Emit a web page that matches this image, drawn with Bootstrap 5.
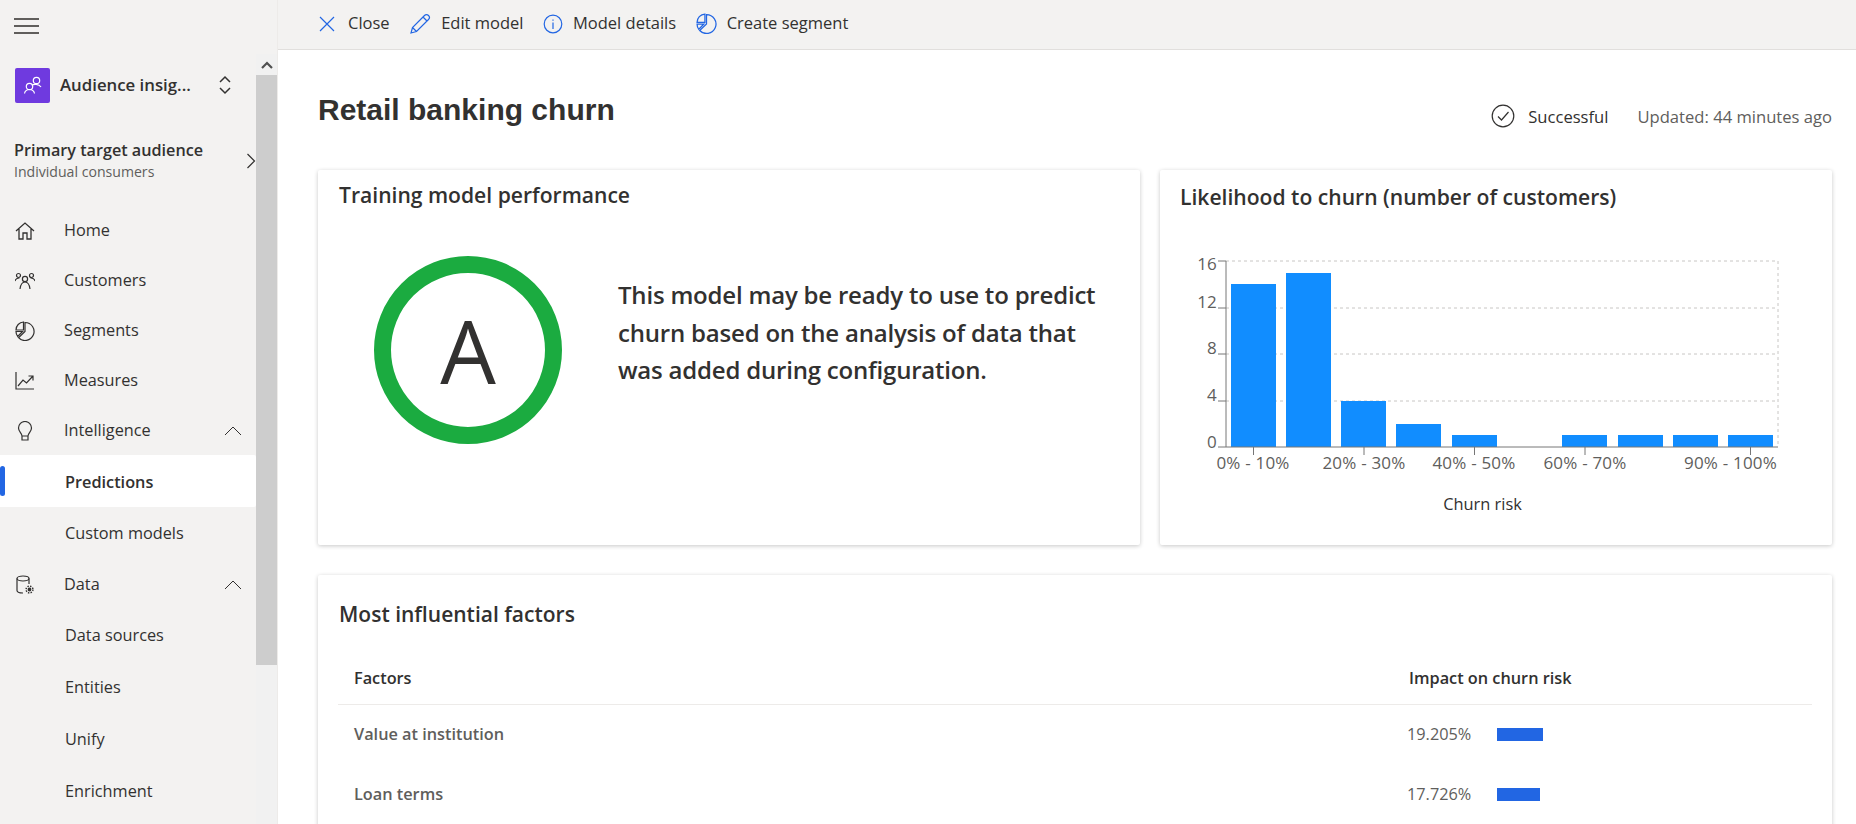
<!doctype html>
<html lang="en">
<head>
<meta charset="utf-8">
<title>Retail banking churn</title>
<link href="https://cdn.jsdelivr.net/npm/bootstrap@5.3.0/dist/css/bootstrap.min.css" rel="stylesheet">
<style>
html,body{height:824px;overflow:hidden;background:#fff}
body{font-family:"Open Sans","Noto Sans",sans-serif;color:#323130;font-size:16.300px}
.shell{height:824px;overflow:hidden}
.side{width:278px;background:#f3f2f1;flex:none;height:824px;overflow:hidden;border-right:1px solid #edebe9}
.burger{height:54px;padding:18px 14px}
.burger span{display:block;width:25px;height:2px;background:#605e5c;margin-bottom:5px}
.sidecol{width:256px;flex:none}
.scrolltrack{width:21px;flex:none;background:#f1f1f1;height:770px}
.scrollup{height:21px;color:#505050}
.scrollthumb{height:590px;background:#cdcdcd}
.switcher{height:62px;padding-left:15px;gap:10px;font-weight:600;font-size:16.800px}
.appicon{width:35px;height:35px;background:#6f3adf;border-radius:2px}
.target{height:89px;padding:0 0 0 14px}
.target .t1{font-weight:600;font-size:16.200px;line-height:21px;margin-bottom:1px}
.target .t2{font-size:14.100px;color:#605e5c;line-height:20px}
.navrow{height:50px;padding-left:15px;padding-top:1px;color:#323130;text-decoration:none}
.navrow .ic{width:24px;margin-right:25px;flex:none;display:flex}
.subrow{height:52px;padding-left:65px;padding-top:1px;color:#323130;text-decoration:none;position:relative}
.subrow.act{background:#fff;font-weight:600;border-radius:0 2px 2px 0;padding-top:2px}
.subrow.act::before{content:"";position:absolute;left:0;top:11px;width:5px;height:30px;background:#2266e3;border-radius:3px}
.chevtail{width:14px;flex:none}
.mainpane{min-width:0;height:824px;overflow:hidden}
.topbar{height:50px;background:#f3f2f1;border-bottom:1px solid #e1dfdd;padding:0 0 2px 40px;gap:19.500px;font-size:16.500px;flex:none}
.tool{gap:10px;color:#323130}
.tool:first-child{gap:12px}
.content{padding:0 24px 0 40px;min-width:0}
.titlerow{height:120px}
.pagetitle{font-family:"Liberation Sans",Arial,sans-serif;font-weight:700;font-size:30px;color:#323130;margin:0;padding-top:42px}
.status{padding-top:55px;font-size:16.600px}
.status svg{margin-top:-1px;margin-right:13px}
.updated{color:#605e5c;margin-left:29px}
.pane{border:0;border-radius:2px;box-shadow:0 1px 4px rgba(0,0,0,.22);background:#fff}
.cardrow{gap:20px;height:375px}
.pane1{width:822px}
.pane2{width:672px}
.panehead{font-size:21.100px;font-weight:600;margin:0;line-height:28px;color:#323130}
.head1{padding:11px 0 0 21px}
.head2{padding:9px 0 0 20px;height:59px;margin-top:4px;margin-bottom:-3px}
.ringwrap{padding:47px 0 0 56px}
.ring{width:188px;height:188px;border:17px solid #1bab40;border-radius:50%;font-size:88px;line-height:1;flex:none;font-weight:400}
.verdict{font-size:24px;font-weight:600;line-height:37.500px;margin:0 0 0 56px;padding-top:20px;letter-spacing:-.2px;width:480px}
.chart{display:block}
.chart text{font-family:"Open Sans",sans-serif;font-size:17px;fill:#605e5c;letter-spacing:.2px}
.chart text.ttl{fill:#323130;font-size:16.400px;letter-spacing:0}
.pane3{margin-top:30px;height:400px;padding:0 20px}
.pane3 h2{padding-top:25px;padding-left:1px;margin-bottom:24px;font-size:21px}
.factors{margin:0;--bs-table-color:#605e5c;font-size:16.300px}
.factors th{color:#323130;font-weight:600;border-bottom:1px solid #edebe9;padding:10px 16px;height:52px;vertical-align:middle}
.factors td{border:0;padding:0 16px;height:60px;vertical-align:middle;font-weight:600;color:#605e5c}
.factors td.val{font-weight:400;padding-left:14px}
.factors th:last-child{width:419px}
.impactbar{height:13px;background:#2266e3;margin-left:26px}
</style>
</head>
<body>
<div class="d-flex shell">
  <aside class="side">
    <div class="burger"><span></span><span></span><span></span></div>
    <div class="d-flex">
      <div class="sidecol">
        <div class="d-flex align-items-center switcher">
          <div class="appicon d-flex align-items-center justify-content-center">
            <svg width="24" height="24" viewBox="0 0 24 24" fill="none" stroke="#fff" stroke-width="1.2"><circle cx="15.5" cy="7.5" r="3.2"/><path d="M11 12.5c1-1.6 7-1.8 9 1.5"/><circle cx="8.5" cy="13.5" r="3.2"/><path d="M3.5 20.5c.5-3 2-4 5-4s4.500 1 5 4"/></svg>
          </div>
          <span class="flex-grow-1">Audience insig...</span>
          <svg class="me-4" width="14" height="20" viewBox="0 0 14 20" fill="none" stroke="#323130" stroke-width="1.5"><path d="M2 7l5-5 5 5M2 13l5 5 5-5"/></svg>
        </div>
        <div class="d-flex align-items-center target">
          <div class="flex-grow-1"><div class="t1">Primary target audience</div><div class="t2">Individual consumers</div></div>
          <svg width="10" height="16" viewBox="0 0 10 16" fill="none" stroke="#323130" stroke-width="1.2"><path d="M1.500 1l7 7-7 7"/></svg>
        </div>
        <a class="d-flex align-items-center navrow"><span class="ic"><svg width="20" height="20" viewBox="0 0 20 20" fill="none" stroke="#323130" stroke-width="1.300"><path d="M1 10l9-8 9 8M4 8v10h4v-6h4v6h4V8"/></svg></span>Home</a>
        <a class="d-flex align-items-center navrow"><span class="ic"><svg width="20" height="20" viewBox="0 0 20 20" fill="none" stroke="#323130" stroke-width="1.200"><circle cx="10" cy="8" r="2.600"/><path d="M5 18c.5-4 2-7 5-7s4.500 3 5 7"/><circle cx="3.500" cy="4.500" r="2"/><circle cx="16.500" cy="4.500" r="2"/><path d="M0 10c.5-2 2-3 4.500-3M20 10c-.5-2-2-3-4.500-3"/></svg></span>Customers</a>
        <a class="d-flex align-items-center navrow"><span class="ic"><svg width="20" height="20" viewBox="0 0 20 20" fill="none" stroke="#323130" stroke-width="1.200"><path d="M10 1.500a9 9 0 1 1-6.500 15.200L10 10.500z"/><path d="M8.500 1v8H1a8 8 0 0 1 7.500-8zM1 10.500h6.500L2.700 15.500A8 8 0 0 1 1 10.500z"/></svg></span>Segments</a>
        <a class="d-flex align-items-center navrow"><span class="ic"><svg width="20" height="20" viewBox="0 0 20 20" fill="none" stroke="#323130" stroke-width="1.200"><path d="M1 1v17h18M3 15l5-6 3.500 3L18 5M13.500 5H18v4.500"/></svg></span>Measures</a>
        <a class="d-flex align-items-center navrow"><span class="ic"><svg width="20" height="20" viewBox="0 0 20 20" fill="none" stroke="#323130" stroke-width="1.200"><path d="M7 15c0-3-3.500-4-3.500-8a6.500 6.500 0 0 1 13 0c0 4-3.500 5-3.500 8zM7 15v4h6v-4"/></svg></span><span class="flex-grow-1">Intelligence</span><svg width="18" height="10" viewBox="0 0 18 10" fill="none" stroke="#323130" stroke-width="1"><path d="M1 9l8-8 8 8"/></svg><span class="chevtail"></span></a>
        <a class="d-flex align-items-center subrow act">Predictions</a>
        <a class="d-flex align-items-center subrow">Custom models</a>
        <a class="d-flex align-items-center navrow"><span class="ic"><svg width="20" height="20" viewBox="0 0 20 20" fill="none" stroke="#323130" stroke-width="1.200"><ellipse cx="8" cy="3.500" rx="6" ry="2.500"/><path d="M2 3.500v12c0 1.500 3 2.500 6 2.500M14 3.500V9"/><circle cx="14.500" cy="14.500" r="2.500" fill="#323130" stroke="#f3f2f1"/><circle cx="14.500" cy="14.500" r="3.400" fill="none" stroke-dasharray="1.400 1.300" stroke-width="1.500"/></svg></span><span class="flex-grow-1">Data</span><svg width="18" height="10" viewBox="0 0 18 10" fill="none" stroke="#323130" stroke-width="1"><path d="M1 9l8-8 8 8"/></svg><span class="chevtail"></span></a>
        <a class="d-flex align-items-center subrow">Data sources</a>
        <a class="d-flex align-items-center subrow">Entities</a>
        <a class="d-flex align-items-center subrow">Unify</a>
        <a class="d-flex align-items-center subrow">Enrichment</a>
      </div>
      <div class="scrolltrack">
        <div class="scrollup d-flex align-items-center justify-content-center"><svg width="12" height="8" viewBox="0 0 12 8" fill="none" stroke="#505050" stroke-width="2.200"><path d="M1 7l5-5 5 5"/></svg></div>
        <div class="scrollthumb"></div>
      </div>
    </div>
  </aside>
  <main class="flex-grow-1 d-flex flex-column mainpane">
    <div class="d-flex align-items-center topbar">
      <div class="d-flex align-items-center tool"><svg width="18" height="18" viewBox="0 0 18 18" fill="none" stroke="#2266e3" stroke-width="1.200"><path d="M2 2l14 14M16 2L2 16"/></svg>Close</div>
      <div class="d-flex align-items-center tool"><svg width="22" height="22" viewBox="0 0 22 22" fill="none" stroke="#2266e3" stroke-width="1.200"><path d="M2 20l1.500-5.500L15.500 2.500a2.500 2.500 0 0 1 4 4L7.500 18.500zM3.500 14.500l4 4M14 4l4 4"/></svg>Edit model</div>
      <div class="d-flex align-items-center tool"><svg width="20" height="20" viewBox="0 0 20 20" fill="none" stroke="#2266e3" stroke-width="1.200"><circle cx="10" cy="10" r="8.800"/><path d="M10 8.500V15M10 5.500v1.200"/></svg>Model details</div>
      <div class="d-flex align-items-center tool"><svg width="21" height="21" viewBox="0 0 20 20" fill="none" stroke="#2266e3" stroke-width="1.200"><path d="M10 1.500a9 9 0 1 1-6.500 15.200L10 10.500z"/><path d="M8.500 1v8H1a8 8 0 0 1 7.500-8zM1 10.500h6.500L2.700 15.500A8 8 0 0 1 1 10.500z"/></svg>Create segment</div>
    </div>
    <div class="content">
      <div class="d-flex justify-content-between titlerow">
        <h1 class="pagetitle">Retail banking churn</h1>
        <div class="d-flex align-items-start status">
          <svg width="24" height="24" viewBox="0 0 24 24" fill="none" stroke="#323130" stroke-width="1.200"><circle cx="12" cy="12" r="10.800"/><path d="M7 12.500l3.500 3.500 7-8"/></svg>
          <span>Successful</span><span class="updated">Updated: 44 minutes ago</span>
        </div>
      </div>
      <div class="d-flex cardrow">
        <section class="card pane pane1">
          <h2 class="panehead head1">Training model performance</h2>
          <div class="d-flex ringwrap">
            <div class="ring d-flex align-items-center justify-content-center">A</div>
            <p class="verdict">This model may be ready to use to predict churn based on the analysis of data that was added during configuration.</p>
          </div>
        </section>
        <section class="card pane pane2">
          <h2 class="panehead head2">Likelihood to churn (number of customers)</h2>
          <svg class="chart" width="672" height="315" viewBox="1160 230 672 315" role="img" aria-label="Likelihood to churn chart">
            <g stroke="#c8c6c4" stroke-dasharray="3 3" fill="none"><path d="M1226 261H1778V447M1226 308H1778M1226 354H1778M1226 401H1778"/></g>
            <g fill="#118dff">
              <rect x="1231" y="284" width="45" height="163"/><rect x="1286" y="273" width="45" height="174"/><rect x="1341" y="401" width="45" height="46"/><rect x="1396" y="424" width="45" height="23"/><rect x="1452" y="435" width="45" height="12"/><rect x="1562" y="435" width="45" height="12"/><rect x="1618" y="435" width="45" height="12"/><rect x="1673" y="435" width="45" height="12"/><rect x="1728" y="435" width="45" height="12"/>
            </g>
            <path d="M1226 261V447H1778M1218 261H1226M1218 308H1226M1218 354H1226M1218 401H1226M1218 447H1226M1253.500 447V455M1364 447V455M1474.500 447V455M1585 447V455M1750.500 447V455" stroke="#767676" fill="none"/>
            <g text-anchor="end"><text x="1217" y="270">16</text><text x="1217" y="308">12</text><text x="1217" y="354">8</text><text x="1217" y="401">4</text><text x="1217" y="448">0</text></g>
            <g text-anchor="middle"><text x="1253" y="469">0% - 10%</text><text x="1364" y="469">20% - 30%</text><text x="1474" y="469">40% - 50%</text><text x="1585" y="469">60% - 70%</text><text x="1777" y="469" text-anchor="end">90% - 100%</text><text class="ttl" x="1482.500" y="510">Churn risk</text></g>
          </svg>
        </section>
      </div>
      <section class="card pane pane3">
        <h2 class="panehead">Most influential factors</h2>
        <table class="table factors">
          <thead><tr><th>Factors</th><th>Impact on churn risk</th></tr></thead>
          <tbody>
            <tr><td>Value at institution</td><td class="val"><div class="d-flex align-items-center"><span>19.205%</span><div class="impactbar" style="width:46px"></div></div></td></tr>
            <tr><td>Loan terms</td><td class="val"><div class="d-flex align-items-center"><span>17.726%</span><div class="impactbar" style="width:43px"></div></div></td></tr>
          </tbody>
        </table>
      </section>
    </div>
  </main>
</div>
<script src="https://cdn.jsdelivr.net/npm/bootstrap@5.3.0/dist/js/bootstrap.bundle.min.js"></script>
</body>
</html>
